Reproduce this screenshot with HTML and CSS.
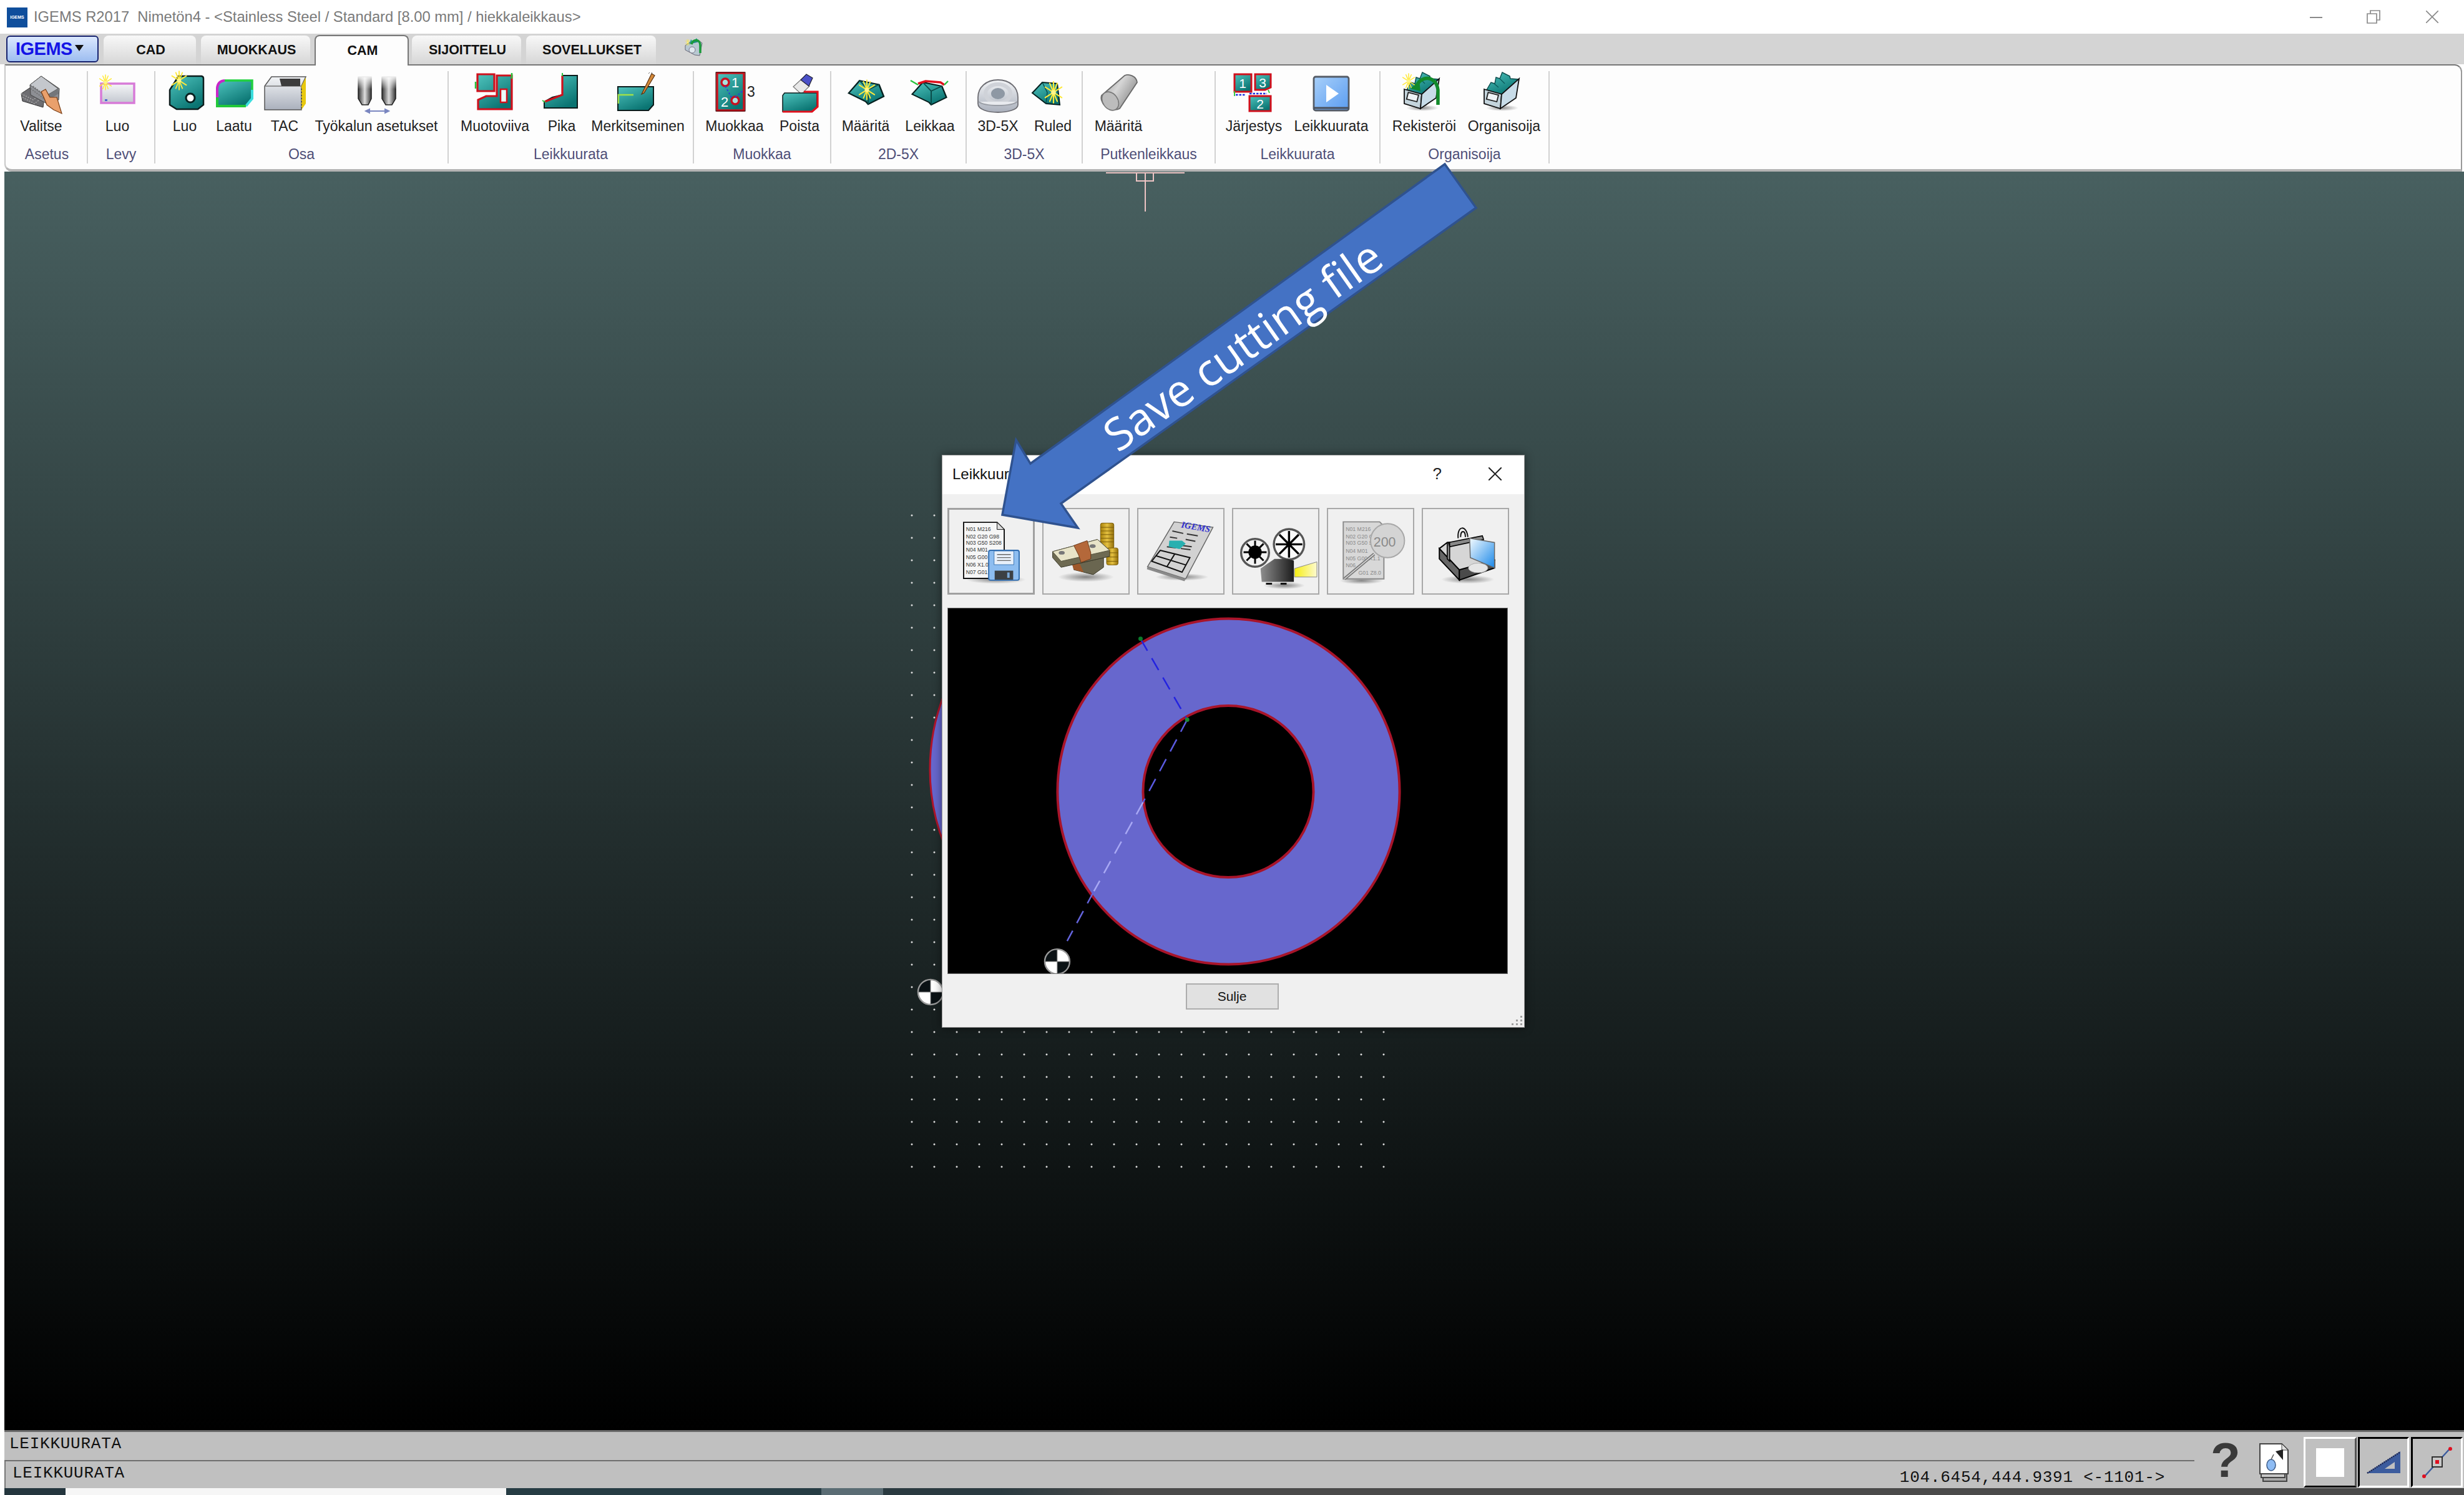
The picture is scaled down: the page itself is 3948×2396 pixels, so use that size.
FILE: index.html
```html
<!DOCTYPE html>
<html lang="fi">
<head>
<meta charset="utf-8">
<title>IGEMS R2017</title>
<link rel="stylesheet" href="styles.css">
</head>
<body>
<svg class="defs" aria-hidden="true">
  <defs>
    <linearGradient id="tl" x1="0" y1="0" x2="0.6" y2="1"><stop offset="0" stop-color="#4fc4be"/><stop offset="1" stop-color="#0a7472"/></linearGradient>
    <linearGradient id="sl" x1="0" y1="0" x2="0" y2="1"><stop offset="0" stop-color="#f2f4f6"/><stop offset="1" stop-color="#aab0bc"/></linearGradient>
    <linearGradient id="pipe" x1="0" y1="0" x2="1" y2="0.6"><stop offset="0" stop-color="#8d8d8d"/><stop offset="0.5" stop-color="#d6d6d6"/><stop offset="1" stop-color="#8a8a8a"/></linearGradient>
    <linearGradient id="toolh" x1="0" y1="0" x2="1" y2="0"><stop offset="0" stop-color="#333"/><stop offset="0.5" stop-color="#ddd"/><stop offset="1" stop-color="#333"/></linearGradient>
    <linearGradient id="fade" x1="0" y1="0" x2="0" y2="1"><stop offset="0" stop-color="#fdfdfd"/><stop offset="1" stop-color="#fdfdfd" stop-opacity="0"/></linearGradient>
    <linearGradient id="play" x1="0" y1="0" x2="1" y2="1"><stop offset="0" stop-color="#a8d0fa"/><stop offset="1" stop-color="#5a9cf0"/></linearGradient>
    <linearGradient id="mon" x1="0" y1="0" x2="1" y2="1"><stop offset="0" stop-color="#f4fbff"/><stop offset="1" stop-color="#1a88e8"/></linearGradient>
    <linearGradient id="body" x1="0" y1="0" x2="1" y2="0"><stop offset="0" stop-color="#8e8e8e"/><stop offset="1" stop-color="#1c1c1c"/></linearGradient>
    <linearGradient id="beam" x1="0" y1="0" x2="1" y2="0"><stop offset="0" stop-color="#f6ee10"/><stop offset="1" stop-color="#fdfad0"/></linearGradient>
    <linearGradient id="coin" x1="0" y1="0" x2="1" y2="0"><stop offset="0" stop-color="#a8820c"/><stop offset="0.5" stop-color="#e4c040"/><stop offset="1" stop-color="#94700a"/></linearGradient>
    <radialGradient id="sh"><stop offset="0" stop-color="#000" stop-opacity=".45"/><stop offset="1" stop-color="#000" stop-opacity="0"/></radialGradient>
    <g id="star" stroke="#ffe93a" stroke-width="1.8" stroke-linecap="round">
      <path d="M0-14V14M-11-7 11 7M-11 7 11-7M-5-12 5 12M5-12-5 12"/>
      <circle r="3.2" fill="#fff58a" stroke="none"/>
    </g>
    <g id="drawer">
      <ellipse cx="32" cy="57" rx="26" ry="5" fill="url(#sh)"/>
      <path d="M7 28 14 16 20 18 22 8 28 10 32 0 44 6 45 10 57 11 54 28 31 36z" fill="url(#tl)" stroke="#0b4a4a" stroke-width="1.4"/>
      <path d="M19 18 26 24M28 10 36 18" stroke="#0b5a5a" stroke-width="1.3"/>
      <path d="M3 27 31 35 29 58 3 50z" fill="#c4d4dc" stroke="#111" stroke-width="1.8"/>
      <path d="M31 35 59 10 54 41 29 58z" fill="#c8dce8" stroke="#111" stroke-width="1.8"/>
      <rect x="8" y="34" width="17" height="11" fill="#eef3f6" stroke="#222" stroke-width="1.8" transform="rotate(14 16 39)"/>
    </g>
    <g id="trap">
      <path d="M7 25 21 6 46 12 52 30 32 42 29 38z" fill="url(#tl)" stroke="#06201f" stroke-width="2"/>
      <path d="M21 6 32 20 46 12M32 20 32 42" stroke="#0a4a48" stroke-width="1.6" fill="none"/>
    </g>
    <g id="mark">
      <circle r="20" fill="#fff" stroke="#9a9a9a" stroke-width="2.5"/>
      <path d="M0 0V-19A19 19 0 0 0-19 0zM0 0V19A19 19 0 0 0 19 0z" fill="#0b1215"/>
      <path d="M-20 0H20M0-20V20" stroke="#8a8a8a" stroke-width="1"/>
    </g>
  </defs>
</svg>

<header class="titlebar">
  <div class="applogo">IGEMS</div>
  <div class="apptitle">IGEMS R2017&nbsp; Nimetön4 - &lt;Stainless Steel / Standard [8.00 mm] / hiekkaleikkaus&gt;</div>
  <div class="winctl">
    <svg class="ctl-min" viewBox="0 0 20 2"><path d="M0 1H20" stroke="#8a8a8a" stroke-width="2"/></svg>
    <svg class="ctl-res" viewBox="0 0 22 22"><path d="M1 6H16V21H1zM6 6V1H21V16H16" fill="none" stroke="#8a8a8a" stroke-width="1.7"/></svg>
    <svg class="ctl-x" viewBox="0 0 20 20"><path d="M0 0 20 20M20 0 0 20" stroke="#8a8a8a" stroke-width="1.7"/></svg>
  </div>
</header>

<nav class="tabstrip">
  <div class="appmenu"><span class="appmenu-t">IGEMS</span><span class="appmenu-c"></span></div>
  <div class="tab tab-cad">CAD</div>
  <div class="tab tab-muo">MUOKKAUS</div>
  <div class="tab tab-cam">CAM</div>
  <div class="tab tab-sij">SIJOITTELU</div>
  <div class="tab tab-sov">SOVELLUKSET</div>
  <svg class="tabicon" viewBox="0 0 32 32">
    <path d="M2 14l7-5 15-3 5 4-4 20-8-1-15-8z" fill="#b8c8d2" stroke="#667" stroke-width="1"/>
    <path d="M8 12l3-8 4 4 5-6 4 6" fill="url(#tl)"/>
    <path d="M12 12C14 3 26 3 26 14V26" fill="none" stroke="#1a9a3a" stroke-width="3.5"/>
    <use href="#star" transform="translate(6 9) scale(.35)"/>
    <circle cx="13" cy="21" r="5" fill="#dfe8ee" stroke="#778" stroke-width="1"/>
  </svg>
</nav>

<section class="ribbon">
  <div class="group g-aset">
    <div class="items">
      <div class="item">
        <svg class="ico" viewBox="0 0 70 66">
          <path d="M3 34 24 20 41 30 38 56 5 46z" fill="#6e6e72" stroke="#333" stroke-width="1"/>
          <path d="M3 34 22 44 41 30M5 40 24 50 40 38" fill="none" stroke="#aaa" stroke-width="1.5" stroke-dasharray="2 2"/>
          <path d="M17 20 35 6 64 26 63 44 44 50 18 36z" fill="#8d8f94" stroke="#444" stroke-width="1"/>
          <path d="M17 20 35 6 62 26 42 38z" fill="#c4c7cc" stroke="#555" stroke-width="1"/>
          <path d="M42 38 62 26 63 34 44 46z" fill="#74767a"/>
          <path d="M18 26 42 44M22 22 46 40" stroke="#666" stroke-width="1.2" stroke-dasharray="2 2"/>
          <path d="M35 31 42 27 49 40 60 40 68 66 55 60 44 52 40 42z" fill="#e9a06c" stroke="#7a3d14" stroke-width="1.2"/>
        </svg>
        <span class="lbl">Valitse</span>
      </div>
    </div>
    <div class="gname">Asetus</div>
  </div>

  <div class="group g-levy">
    <div class="items">
      <div class="item">
        <svg class="ico" viewBox="0 0 70 66">
          <rect x="9" y="18" width="53" height="31" fill="url(#sl)" opacity=".7"/>
          <rect x="9" y="18" width="53" height="31" fill="none" stroke="#d77bd8" stroke-width="3.5"/>
          <rect x="15" y="43" width="4" height="3" fill="#4a6ad0"/>
          <use href="#star" transform="translate(16 16) scale(.85)"/>
        </svg>
        <span class="lbl">Luo</span>
      </div>
    </div>
    <div class="gname">Levy</div>
  </div>

  <div class="group g-osa">
    <div class="items">
      <div class="item">
        <svg class="ico" viewBox="0 0 70 66">
          <path d="M25 6H62a4 4 0 0 1 3 4V52L56 59H22L11 52V28z" fill="url(#tl)" stroke="#0c1d1d" stroke-width="2.5"/>
          <circle cx="44" cy="41" r="7" fill="#fff" stroke="#082020" stroke-width="3"/>
          <use href="#star" transform="translate(26 13) scale(1.05)"/>
        </svg>
        <span class="lbl">Luo</span>
      </div>
      <div class="item">
        <svg class="ico" viewBox="0 0 70 66">
          <path d="M20 13H64V42L54 54H8V25Q9 14 20 13z" fill="url(#tl)"/>
          <path d="M8 40V25Q9 14 20 13" fill="none" stroke="#c826c8" stroke-width="4"/>
          <path d="M20 13H64V28" fill="none" stroke="#22d040" stroke-width="3.5"/>
          <path d="M64 28V42L54 54" fill="none" stroke="#3adede" stroke-width="4"/>
          <path d="M54 54H8V40" fill="none" stroke="#22c83a" stroke-width="4"/>
        </svg>
        <span class="lbl">Laatu</span>
      </div>
      <div class="item">
        <svg class="ico" viewBox="0 0 70 66">
          <path d="M3 22 14 7H69L62 22V60H3z" fill="url(#sl)" stroke="#555" stroke-width="1.5"/>
          <path d="M3 22H62" stroke="#777" stroke-width="1.5"/>
          <path d="M27 10H60V22H30z" fill="#3c3c3c"/>
          <path d="M62 22 69 8V50L62 60z" fill="#e8c80e"/>
          <path d="M62 26V58" stroke="#555" stroke-width="2" stroke-dasharray="2 3"/>
        </svg>
        <span class="lbl">TAC</span>
      </div>
      <div class="item">
        <svg class="ico" viewBox="0 0 70 66">
          <path d="M6 7H27V42L22 52H12L6 42z" fill="url(#toolh)" stroke="#222" stroke-width="1.5"/>
          <path d="M44 7H66V42L60 52H50L44 42z" fill="url(#toolh)" stroke="#222" stroke-width="1.5"/>
          <rect x="3" y="5" width="66" height="22" fill="url(#fade)"/>
          <path d="M18 62H55M18 62l6-3v6zM55 62l-6-3v6z" stroke="#7a86c0" stroke-width="2" fill="#7a86c0"/>
        </svg>
        <span class="lbl">Työkalun asetukset</span>
      </div>
    </div>
    <div class="gname">Osa</div>
  </div>

  <div class="group g-lk1">
    <div class="items">
      <div class="item">
        <svg class="ico" viewBox="0 0 70 66">
          <path d="M7 3H34V30H7zM38 5H62V59H8V44L21 38H38z" fill="url(#tl)" stroke="#d0101c" stroke-width="3.2"/>
          <rect x="44" y="27" width="10" height="21" fill="#eafcfa" stroke="#d0101c" stroke-width="2.5"/>
          <path d="M62 1V10M4 15V26" stroke="#26c43c" stroke-width="2.5"/>
        </svg>
        <span class="lbl">Muotoviiva</span>
      </div>
      <div class="item">
        <svg class="ico" viewBox="0 0 70 66">
          <path d="M36 5H60V57H7V47L20 40 36 36z" fill="url(#tl)" stroke="#0b1b1b" stroke-width="2"/>
          <path d="M36 5V36L8 47" fill="none" stroke="#d0101c" stroke-width="3.2"/>
          <path d="M36 1V6M4 45 9 48" stroke="#26c43c" stroke-width="2"/>
        </svg>
        <span class="lbl">Pika</span>
      </div>
      <div class="item">
        <svg class="ico" viewBox="0 0 70 66">
          <path d="M3 23H60V52L52 61H3z" fill="url(#tl)" stroke="#0b1b1b" stroke-width="2"/>
          <path d="M4 50V36H28" fill="none" stroke="#9fe04a" stroke-width="2.4"/>
          <path d="M57 2 62 5 45 33 41 35z" fill="#d58a3a" stroke="#5a3212" stroke-width="1.2"/>
          <path d="M52 2l2-2M57 0l1 2" stroke="#666" stroke-width="1"/>
        </svg>
        <span class="lbl">Merkitseminen</span>
      </div>
    </div>
    <div class="gname">Leikkuurata</div>
  </div>

  <div class="group g-muo">
    <div class="items">
      <div class="item">
        <svg class="ico" viewBox="0 0 70 66">
          <rect x="7" y="1" width="43" height="60" fill="url(#tl)" stroke="#d0101c" stroke-width="3.4"/>
          <rect x="5" y="0" width="47" height="62" fill="none" stroke="#200" stroke-width="1"/>
          <circle cx="20" cy="16" r="6" fill="#a8e0dc" stroke="#c81020" stroke-width="3.4"/>
          <circle cx="36" cy="45" r="6" fill="#a8e0dc" stroke="#c81020" stroke-width="3.4"/>
          <path d="M20 22 30 40M36 40 50 28" stroke="#2a3ae0" stroke-width="1.8" stroke-dasharray="3 3" fill="none"/>
          <text class="t-ic" x="30" y="24">1</text>
          <text class="t-ic" x="13" y="55">2</text>
          <text class="t-3" x="55" y="39">3</text>
        </svg>
        <span class="lbl">Muokkaa</span>
      </div>
      <div class="item">
        <svg class="ico" viewBox="0 0 70 66">
          <path d="M25 23 38 11 51 22 38 35z" fill="#e8e8e8" stroke="#777" stroke-width="1.2"/>
          <path d="M37 12 46 3 56 9 50 22z" fill="#4a50c8" stroke="#223" stroke-width="1.2"/>
          <path d="M11 33H63V55L55 63H8V37z" fill="url(#tl)" stroke="#0b1b1b" stroke-width="1.5"/>
          <path d="M42 31H64V55L55 63H8" fill="none" stroke="#e0101c" stroke-width="3.2"/>
        </svg>
        <span class="lbl">Poista</span>
      </div>
    </div>
    <div class="gname">Muokkaa</div>
  </div>

  <div class="group g-d2">
    <div class="items">
      <div class="item">
        <svg class="ico" viewBox="0 0 70 66">
          <use href="#trap" transform="translate(-1 7) scale(1.25 1.05)"/>
          <use href="#star" transform="translate(37 28) scale(1.1)"/>
        </svg>
        <span class="lbl">Määritä</span>
      </div>
      <div class="item">
        <svg class="ico" viewBox="0 0 70 66">
          <use href="#trap" transform="translate(-2 10) scale(1.22 1)"/>
          <path d="M16 18 28 14 52 16 58 20" fill="none" stroke="#e0101c" stroke-width="3.5"/>
          <path d="M4 13 16 20M58 20 64 14" stroke="#26c43c" stroke-width="2.4"/>
        </svg>
        <span class="lbl">Leikkaa</span>
      </div>
    </div>
    <div class="gname">2D-5X</div>
  </div>

  <div class="group g-d3">
    <div class="items">
      <div class="item">
        <svg class="ico" viewBox="0 0 70 66">
          <path d="M3 50V40C3 24 16 12 35 12S67 24 67 40V52C67 60 50 64 35 64S3 60 3 50z" fill="url(#sl)" stroke="#6e6e74" stroke-width="1.8"/>
          <ellipse cx="35" cy="34" rx="20" ry="15" fill="none" stroke="#cfd2d8" stroke-width="6"/>
          <ellipse cx="35" cy="34" rx="11" ry="9" fill="#8e98a4"/>
          <path d="M4 47C14 55 56 55 66 47" fill="#e8eaee" stroke="#9a9ea6" stroke-width="2"/>
        </svg>
        <span class="lbl">3D-5X</span>
      </div>
      <div class="item">
        <svg class="ico" viewBox="0 0 70 66">
          <path d="M2 33 18 16 42 18 46 52 24 50z" fill="url(#tl)" stroke="#06201f" stroke-width="2"/>
          <path d="M18 16 26 32 24 50" stroke="#0a4a48" fill="none" stroke-width="1.4"/>
          <use href="#star" transform="translate(36 32) scale(1.2)"/>
        </svg>
        <span class="lbl">Ruled</span>
      </div>
    </div>
    <div class="gname">3D-5X</div>
  </div>

  <div class="group g-put">
    <div class="items">
      <div class="item">
        <svg class="ico" viewBox="0 0 70 66">
          <path d="M8 37 45 5C52 2 64 6 65 16L37 58C28 63 12 57 8 45 7 42 7 40 8 37z" fill="url(#pipe)" stroke="#6a6a6a" stroke-width="1.8"/>
          <ellipse cx="22" cy="46" rx="12" ry="16" transform="rotate(-35 22 46)" fill="#bcbcbc" stroke="#777" stroke-width="1.6"/>
        </svg>
        <span class="lbl">Määritä</span>
      </div>
    </div>
    <div class="gname">Putkenleikkaus</div>
  </div>

  <div class="group g-lk2">
    <div class="items">
      <div class="item">
        <svg class="ico" viewBox="0 0 70 66">
          <rect x="4" y="3" width="27" height="28" fill="url(#tl)" stroke="#d0101c" stroke-width="3"/>
          <path d="M37 3H62V24L53 28H37z" fill="url(#tl)" stroke="#d0101c" stroke-width="3"/>
          <rect x="28" y="38" width="34" height="24" fill="url(#tl)" stroke="#d0101c" stroke-width="3"/>
          <path d="M6 36H22M28 34H56" stroke="#2030e0" stroke-width="2.6" stroke-dasharray="3.5 2"/>
          <path d="M4 30V38M58 28 60 33" stroke="#3ac840" stroke-width="2"/>
          <text class="t-ic2" x="17" y="25">1</text>
          <text class="t-ic2" x="49" y="24">3</text>
          <text class="t-ic2" x="45" y="58">2</text>
        </svg>
        <span class="lbl">Järjestys</span>
      </div>
      <div class="item">
        <svg class="ico" viewBox="0 0 70 66">
          <rect x="7" y="7" width="56" height="54" rx="3" fill="url(#play)" stroke="#555c66" stroke-width="2.8"/>
          <path d="M7 57H63" stroke="#4a4f58" stroke-width="3"/>
          <path d="M27 20 47 34 27 48z" fill="#fff"/>
        </svg>
        <span class="lbl">Leikkuurata</span>
      </div>
    </div>
    <div class="gname">Leikkuurata</div>
  </div>

  <div class="group g-org">
    <div class="items">
      <div class="item">
        <svg class="ico" viewBox="0 0 70 66">
          <use href="#drawer"/>
          <path d="M22 24C28 4 54 4 57 28V52" fill="none" stroke="#128a2a" stroke-width="5.5"/>
          <path d="M13 26 27 13 29 30z" fill="#128a2a"/>
          <use href="#star" transform="translate(10 14) scale(.85)"/>
        </svg>
        <span class="lbl">Rekisteröi</span>
      </div>
      <div class="item">
        <svg class="ico" viewBox="0 0 70 66">
          <use href="#drawer"/>
        </svg>
        <span class="lbl">Organisoija</span>
      </div>
    </div>
    <div class="gname">Organisoija</div>
  </div>
</section>

<main class="canvas">
  <div class="dotgrid"></div>
  <svg class="cad" viewBox="0 0 3941 2017">
    <circle cx="1812" cy="958" r="329" fill="#6767cd" stroke="#b0142a" stroke-width="3"/>
    <use href="#mark" transform="translate(1484 1315)"/>
    <path d="M1765 2H1891M1828 2V64M1814 2V15H1841V2" fill="none" stroke="#eec4c4" stroke-width="2"/>
  </svg>
</main>

<footer class="status">
  <div class="lines">
    <div class="row row-a">LEIKKUURATA</div>
    <div class="row row-b"><span class="msg">LEIKKUURATA</span><span class="coord">104.6454,444.9391 &lt;-1101-&gt;</span></div>
  </div>
  <div class="tools">
    <div class="help">?</div>
    <svg class="docico" viewBox="0 0 52 64">
      <path d="M6 14H44V62H6z" fill="#a8a8a8" stroke="#444" stroke-width="2"/>
      <path d="M3 7H41V56H3z" fill="#c8c8c8" stroke="#444" stroke-width="2"/>
      <path d="M1 2H36L46 12V50H1z" fill="#fff" stroke="#444" stroke-width="2"/>
      <path d="M36 2V12H46z" fill="#e0e0e0" stroke="#444" stroke-width="1"/>
      <path d="M26 14 38 11 38 28z" fill="#222"/>
      <ellipse cx="19" cy="36" rx="7" ry="9" fill="#8ebcf4" stroke="#3a5a88" stroke-width="1.5"/>
      <path d="M19 27 23 19" stroke="#555" stroke-width="1.5"/>
    </svg>
    <div class="tbtn tbtn-up"><div class="swatch"></div></div>
    <div class="tbtn tbtn-down tb2">
      <svg class="tb-ico" viewBox="0 0 56 38"><path d="M1 36 55 1V36z" fill="#3c5c9e"/><path d="M30 29 46 18V29z" fill="#c0c0c0"/><path d="M2 36 55 2" stroke="#222a50" stroke-width="2.5" stroke-dasharray="2 1.5"/></svg>
    </div>
    <div class="tbtn tbtn-down tb3">
      <svg class="tb-ico2" viewBox="0 0 50 50"><path d="M4 48 46 2" stroke="#3c5c9e" stroke-width="2.5"/><rect x="17" y="16" width="16" height="16" fill="#c8c8c8" stroke="#222" stroke-width="1.8"/><rect x="22" y="21" width="6" height="6" fill="#e01020"/><circle cx="4" cy="47" r="3" fill="#e01020"/><circle cx="46" cy="3" r="3" fill="#e01020"/></svg>
    </div>
  </div>
</footer>
<div class="taskstrip"></div>

<section class="dialog">
  <div class="dlg-title">
    <span class="dlg-name">Leikkuurata</span>
    <span class="dlg-q">?</span>
    <svg class="dlg-x" viewBox="0 0 21 21"><path d="M0 0 21 21M21 0 0 21" stroke="#222" stroke-width="2"/></svg>
  </div>
  <div class="dlg-btns">
    <div class="dbtn dbtn-on">
      <svg class="dico" viewBox="0 0 140 139">
        <ellipse cx="78" cy="117" rx="50" ry="7" fill="url(#sh)"/>
        <path d="M24 21H80L92 33V115H24z" fill="#f6f6f6" stroke="#111" stroke-width="2"/>
        <path d="M80 21V33H92z" fill="#ddd" stroke="#111" stroke-width="1"/>
        <g class="code">
          <text x="28" y="36">N01 M216</text>
          <text x="28" y="48">N02 G20 G98</text>
          <text x="28" y="59">N03 G50 S208</text>
          <text x="28" y="70">N04 M01</text>
          <text x="28" y="83">N05 G00</text>
          <text x="28" y="95">N06 X1.0</text>
          <text x="28" y="108">N07 G01</text>
        </g>
        <rect x="66" y="68" width="51" height="50" rx="3" fill="#8dbdf0" stroke="#2f6cb0" stroke-width="2"/>
        <rect x="75" y="69" width="33" height="23" fill="#e8f0fa" stroke="#3a74b4" stroke-width="1"/>
        <path d="M80 75H103M80 80H103M80 85H103" stroke="#666" stroke-width="1.4"/>
        <rect x="76" y="102" width="31" height="15" fill="#3c4044"/>
        <rect x="97" y="105" width="4" height="9" fill="#7aa8d8"/>
      </svg>
    </div>
    <div class="dbtn">
      <svg class="dico" viewBox="0 0 140 139">
        <ellipse cx="70" cy="112" rx="46" ry="8" fill="url(#sh)"/>
        <rect x="94" y="23" width="22" height="42" rx="3" fill="url(#coin)" stroke="#7a5c08"/>
        <rect x="104" y="64" width="19" height="28" rx="3" fill="url(#coin)" stroke="#7a5c08"/>
        <path d="M94 30H116M94 36H116M94 42H116M94 48H116M94 54H116M104 72H123M104 79H123M104 86H123" stroke="#7a5c08" stroke-width="1"/>
        <path d="M49 92 99 80V96L82 108 50 100z" fill="#6a6650" stroke="#3a3828"/>
        <path d="M46 88 58 86 66 104 50 100z" fill="#a0582a"/>
        <path d="M15 70 89 50 109 68V78L29 96 15 80z" fill="#6e6a52" stroke="#3a3828"/>
        <path d="M15 70 89 50 109 68 29 86z" fill="#e8e4c8" stroke="#55533e"/>
        <ellipse cx="30" cy="72" rx="5" ry="3" fill="#777"/><ellipse cx="81" cy="61" rx="5" ry="3" fill="#777"/>
        <path d="M50 60 72 52 78 72V82L62 88 58 76z" fill="#b4683a" stroke="#6a3818"/>
      </svg>
    </div>
    <div class="dbtn">
      <svg class="dico" viewBox="0 0 140 139">
        <ellipse cx="72" cy="112" rx="44" ry="6" fill="url(#sh)"/>
        <path d="M59 21 123 30 78 115 15 95z" fill="#d2d2d2" stroke="#666" stroke-width="1.5"/>
        <path d="M15 95 78 115 76 119 14 99z" fill="#8a8a8a"/>
        <text class="news" transform="translate(70 30) rotate(10)">IGEMS</text>
        <path d="M56 36 74 40M80 41 98 44M52 46 64 48M78 50 94 53M72 60 88 62M70 65 86 67M47 62 62 64" stroke="#333" stroke-width="2"/>
        <path d="M51 52H72L78 57 68 66 50 62z" fill="#28b0b0"/>
        <path d="M36 68 85 80 72 104 22 86zM29 77 78 92M60 74 47 95" fill="none" stroke="#111" stroke-width="2"/>
      </svg>
    </div>
    <div class="dbtn">
      <svg class="dico" viewBox="0 0 140 139">
        <ellipse cx="84" cy="126" rx="34" ry="6" fill="url(#sh)"/>
        <path d="M101 98 138 87V112H101z" fill="url(#beam)" stroke="#888" stroke-width="1"/>
        <circle cx="36" cy="72" r="23" fill="#f2f2f2" stroke="#555" stroke-width="3.5"/>
        <circle cx="36" cy="71" r="11" fill="#000"/>
        <path d="M36 52V90M17 71H55M22 57 50 85M50 57 22 85" stroke="#000" stroke-width="3"/>
        <circle cx="92" cy="58" r="25" fill="#fafafa" stroke="#555" stroke-width="3.5"/>
        <path d="M92 36V80M70 58H114M76 42 108 74M108 42 76 74" stroke="#000" stroke-width="3.5"/>
        <circle cx="92" cy="58" r="4" fill="#000"/>
        <path d="M45 98 68 82H86L100 85V120H47z" fill="url(#body)"/>
        <path d="M54 123H64M78 123H88" stroke="#111" stroke-width="3"/>
      </svg>
    </div>
    <div class="dbtn">
      <svg class="dico" viewBox="0 0 140 139">
        <ellipse cx="55" cy="118" rx="36" ry="6" fill="url(#sh)"/>
        <path d="M25 21H85L92 28V115H25z" fill="#d8d8d8" stroke="#8a8a8a" stroke-width="2"/>
        <g class="code code-g">
          <text x="29" y="36">N01 M216</text>
          <text x="29" y="48">N02 G20 G</text>
          <text x="29" y="59">N03 G50 S</text>
          <text x="29" y="72">N04 M01</text>
          <text x="29" y="84">N05 G00 X1.1</text>
          <text x="29" y="96">N06</text>
          <text x="50" y="108">G01 Z8.0</text>
        </g>
        <path d="M27 115 76 74" stroke="#777" stroke-width="5"/>
        <path d="M27 115 76 74" stroke="#ddd" stroke-width="1.5"/>
        <circle cx="98" cy="52" r="28" fill="#d4d4d4" stroke="#a8a8a8" stroke-width="2"/>
        <text class="mag" x="75" y="62">200</text>
      </svg>
    </div>
    <div class="dbtn">
      <svg class="dico" viewBox="0 0 140 139">
        <ellipse cx="74" cy="116" rx="44" ry="7" fill="url(#sh)"/>
        <path d="M27 65 60 100V117L27 82z" fill="#666" stroke="#000" stroke-width="2"/>
        <path d="M60 100 118 84V97L60 117z" fill="#4a4a4a" stroke="#000" stroke-width="2"/>
        <path d="M27 65 40 55 100 52 118 84 60 100z" fill="#d6d6d6" stroke="#000" stroke-width="2"/>
        <path d="M40 55H44V86L40 82zM42 55 98 44 100 50 44 62z" fill="#888" stroke="#000" stroke-width="1.6"/>
        <path d="M58 48C56 26 72 26 74 46M62 46C62 34 70 34 70 46" fill="none" stroke="#111" stroke-width="2"/>
        <path d="M77 48 118 55V97L78 80z" fill="url(#mon)" stroke="#666" stroke-width="1.5"/>
        <ellipse cx="91" cy="97" rx="16" ry="8" fill="#e6e6e6" stroke="#aaa"/>
      </svg>
    </div>
  </div>
  <div class="preview">
    <svg class="prev-svg" viewBox="0 0 898 587">
      <ellipse cx="450.5" cy="294.5" rx="275" ry="278" fill="#6767cd" stroke="#a8142a" stroke-width="4"/>
      <ellipse cx="450" cy="294.5" rx="137" ry="138" fill="#000" stroke="#a8142a" stroke-width="4"/>
      <path d="M309 49 384 179" stroke="#2222e0" stroke-width="2.5" stroke-dasharray="22 14" fill="none"/>
      <path d="M384 179 313 312" stroke="#5a5ae0" stroke-width="2.5" stroke-dasharray="22 14" fill="none"/>
      <path d="M313 312 234 455" stroke="#a8a8f4" stroke-width="2.5" stroke-dasharray="22 14" fill="none"/>
      <path d="M234 455 191 535" stroke="#6464dc" stroke-width="2.5" stroke-dasharray="22 14" fill="none"/>
      <circle cx="309" cy="49" r="3.5" fill="#0a7a2a"/><circle cx="384" cy="179" r="3.5" fill="#1a8a3a"/>
      <use href="#mark" transform="translate(175 568)"/>
    </svg>
  </div>
  <div class="dlg-foot"><div class="close-btn">Sulje</div></div>
  <svg class="grip" viewBox="0 0 18 16"><path d="M15 1h3v3h-3zM8 7h3v3H8zM15 7h3v3h-3zM1 13h3v3H1zM8 13h3v3H8zM15 13h3v3h-3z" fill="#a0a0a0"/></svg>
</section>

<svg class="arrow" viewBox="0 0 3948 2396">
  <path d="M2315 263 2365 333 1700 807 1727 846 1606 825 1628 705 1651 743z" fill="#4472c4" stroke="#2f528f" stroke-width="3.5"/>
</svg>
<div class="arrow-text">Save cutting file</div>
</body>
</html>
```
FILE: styles.css
```css
* { box-sizing: border-box; }
html, body { margin: 0; padding: 0; }
body {
  position: relative;
  width: 3948px;
  height: 2396px;
  overflow: hidden;
  display: flex;
  flex-direction: column;
  background: #fff;
  font-family: "Liberation Sans", Arial, sans-serif;
  color: #222;
}
.defs { position: absolute; width: 0; height: 0; }

/* title bar */
.titlebar { flex: 0 0 54px; display: flex; align-items: center; padding-left: 11px; background: #fff; }
.applogo {
  width: 33px; height: 32px; margin-top: 2px;
  background: #0f4e9c; color: #fff;
  font-size: 7px; font-weight: 700; line-height: 32px; text-align: center;
  overflow: hidden;
}
.apptitle { margin-left: 10px; font-size: 23.75px; color: #7a7a7a; white-space: nowrap; }
.winctl { margin-left: auto; display: flex; align-items: center; padding-right: 41px; }
.ctl-min { width: 20px; height: 2px; margin-top: 1px; }
.ctl-res { width: 22px; height: 22px; margin-left: 71px; }
.ctl-x { width: 20px; height: 20px; margin-left: 73px; }

/* tabs */
.tabstrip { flex: 0 0 49px; display: flex; align-items: flex-end; padding-left: 10px; background: #d4d4d4; position: relative; }
.appmenu {
  width: 148px; height: 43px; margin-bottom: 3px;
  display: flex; align-items: center; padding-left: 13px; gap: 4px;
  background: linear-gradient(#dbe8ff, #9dbdf0);
  border: 2px solid #16226e; border-radius: 6px;
}
.appmenu-t { font-size: 29px; font-weight: 700; color: #1414e6; letter-spacing: -.5px; }
.appmenu-c { width: 0; height: 0; border-left: 7px solid transparent; border-right: 7px solid transparent; border-top: 10px solid #111; margin-top: -4px; }
.tab {
  height: 46px; display: flex; align-items: center; justify-content: center; padding-left: 3px;
  background: linear-gradient(#f8f8f8, #d6d6d6);
  border-radius: 8px 8px 0 0;
  font-size: 21.5px; font-weight: 700; color: #111;
}
.tab-cad { width: 148px; margin-left: 8px; }
.tab-muo { width: 175px; margin-left: 8px; }
.tab-cam {
  width: 151px; height: 49px; margin-left: 7px; margin-bottom: -2px; position: relative; z-index: 2;
  background: #fdfdfd; border: 2px solid #777; border-bottom: 0;
}
.tab-sij { width: 175px; margin-left: 5px; }
.tab-sov { width: 208px; margin-left: 8px; }
.tabicon { width: 32px; height: 32px; margin-left: 45px; margin-bottom: 12px; }

/* ribbon */
.ribbon {
  flex: 0 0 172px;
  display: flex;
  margin-left: 7px; margin-right: 3px;
  padding: 9px 0 0 2px;
  background: #fdfdfd;
  border-top: 2px solid #777;
  border-left: 2px solid #c8c8c8;
  border-right: 2px solid #999;
  border-bottom: 4px solid #b4b4b4;
  border-radius: 0 12px 0 12px;
}
.group { height: 148px; display: flex; flex-direction: column; border-right: 2px solid #d2d2d2; flex: none; }
.items { display: grid; padding-top: 2px; }
.item { display: flex; flex-direction: column; align-items: center; }
.ico { width: 70px; height: 66px; flex: none; overflow: visible; }
.lbl { font-size: 23px; line-height: 26px; margin-top: 7px; color: #222; white-space: nowrap; }
.gname { margin-top: auto; height: 28px; line-height: 26px; text-align: center; font-size: 23px; color: #4f4f78; white-space: nowrap; }

.g-aset { width: 130px; } .g-aset .items { grid-template-columns: 110px; }
.g-levy { width: 108px; } .g-levy .items { grid-template-columns: 94px; }
.g-osa { width: 470px; } .g-osa .items { grid-template-columns: 94px 64px 98px 196px; }
.g-lk1 { width: 393px; } .g-lk1 .items { grid-template-columns: 148px 66px 178px; }
.g-muo { width: 220px; } .g-muo .items { grid-template-columns: 130px 78px; }
.g-d2 { width: 217px; } .g-d2 .items { grid-template-columns: 110px 96px; }
.g-d3 { width: 186px; } .g-d3 .items { grid-template-columns: 100px 76px; }
.g-put { width: 213px; } .g-put .items { grid-template-columns: 114px; }
.g-lk2 { width: 264px; } .g-lk2 .items { grid-template-columns: 122px 126px; }
.g-org { width: 271px; } .g-org .items { grid-template-columns: 140px 116px; }

.t-ic { font: 400 22px "Liberation Sans", sans-serif; fill: #fff; }
.t-ic2 { font: 400 21px "Liberation Sans", sans-serif; fill: #fff; text-anchor: middle; }
.t-3 { font: 400 23px "Liberation Sans", sans-serif; fill: #222; }

/* canvas */
.canvas {
  flex: 1 1 auto; margin-left: 7px; position: relative; overflow: hidden;
  background: linear-gradient(#486060, #000);
}
.dotgrid {
  position: absolute; left: 1436px; top: 533px; width: 792px; height: 1080px;
  background-image: radial-gradient(circle at 18px 18px, #dcdcdc 0 1.2px, transparent 1.8px);
  background-size: 36px 36px;
}
.cad { position: absolute; left: 0; top: 0; width: 3941px; height: 2017px; }

/* status */
.status {
  flex: 0 0 93px; margin-left: 7px; display: flex;
  background: #c0c0c0;
  border-top: 3px solid #6a6a6a;
  font-family: "Liberation Mono", monospace; font-size: 26px; letter-spacing: .75px; color: #111;
}
.lines { width: 3509px; display: flex; flex-direction: column; }
.row { white-space: nowrap; }
.row-a { height: 47px; line-height: 38px; padding-left: 8px; border-bottom: 2px solid #6e6e6e; }
.row-b { height: 43px; display: flex; justify-content: space-between; align-items: flex-start; padding-left: 11px; padding-right: 47px; border-left: 2px solid #777; }
.msg { padding-top: 4px; line-height: 30px; }
.coord { padding-top: 11px; line-height: 30px; }
.tools { flex: 1; display: flex; align-items: flex-start; font-family: "Liberation Sans", sans-serif; letter-spacing: 0; }
.help { width: 40px; margin-left: 26px; margin-top: 12px; font-size: 78px; font-weight: 700; line-height: 66px; color: #3a3a3a; text-align: center; }
.docico { width: 52px; height: 64px; margin-left: 38px; margin-top: 17px; }
.tbtn { height: 81px; margin-top: 8px; display: flex; align-items: center; justify-content: center; flex: none; border-style: solid; border-width: 3px; }
.tbtn-up { width: 85px; margin-left: 19px; border-color: #fff #555 #000 #fff; }
.tbtn-down { border-color: #000 #fff #fff #000; }
.tb2 { width: 82px; margin-left: 2px; }
.tb3 { width: 83px; margin-left: 3px; }
.swatch { width: 45px; height: 46px; background: #fff; }
.tb-ico { width: 56px; height: 38px; }
.tb-ico2 { width: 50px; height: 50px; }
.taskstrip {
  flex: 0 0 11px;
  background: linear-gradient(90deg, #fff 0 7px, #24363e 7px 105px, #f6f6f6 105px 811px, #263c44 811px 1316px, #5a6c74 1316px 1415px, #2a3a40 1415px 1600px, #4a4a4a 1800px, #4a4a4a 100%);
}

/* dialog */
.dialog {
  position: absolute; left: 1509px; top: 729px; width: 934px; height: 918px;
  display: flex; flex-direction: column;
  background: #f0f0f0; border: 1px solid #9a9a9a;
  box-shadow: 0 0 14px rgba(0,0,0,.45);
}
.dlg-title { flex: 0 0 62px; display: flex; align-items: center; padding: 0 0 3px 16px; background: #fff; }
.dlg-name { font-size: 24px; color: #111; }
.dlg-q { margin-left: auto; font-size: 26px; color: #222; }
.dlg-x { width: 21px; height: 21px; margin-left: 75px; margin-right: 36px; }
.dlg-btns { display: flex; gap: 12px; padding: 22px 0 0 8px; }
.dbtn { width: 140px; height: 139px; flex: none; border: 2px solid #a8a8a8; background: #f0f0f0; }
.dbtn-on { border: 3px solid #a0a0a0; }
.dico { display: block; width: 100%; height: 100%; overflow: visible; }
.code text { font: 400 9px "Liberation Sans", sans-serif; fill: #333; }
.code-g text { fill: #8a8a8a; }
.news { font: italic 700 15px "Liberation Serif", serif; fill: #3030d0; }
.mag { font: 400 22px "Liberation Sans", sans-serif; fill: #8a8a8a; }
.preview { margin: 21px 0 0 8px; width: 898px; height: 587px; flex: none; background: #000; border: 1px solid #777; overflow: hidden; }
.prev-svg { display: block; width: 100%; height: 100%; }
.dlg-foot { display: flex; justify-content: center; padding: 15px 4px 0 0; }
.close-btn {
  width: 149px; height: 42px; display: flex; align-items: center; justify-content: center;
  background: #e1e1e1; border: 2px solid #adadad; font-size: 21px; color: #111;
}
.grip { position: absolute; right: 3px; bottom: 3px; width: 18px; height: 16px; }

/* callout arrow */
.arrow { position: absolute; left: 0; top: 0; width: 3948px; height: 2396px; pointer-events: none; }
.arrow-text {
  position: absolute; left: 1690px; top: 502px; width: 600px; text-align: center;
  font-family: "Open Sans", sans-serif; font-size: 72px; line-height: 100px; color: #fff; white-space: nowrap;
  transform: rotate(-35.2deg);
}
```
